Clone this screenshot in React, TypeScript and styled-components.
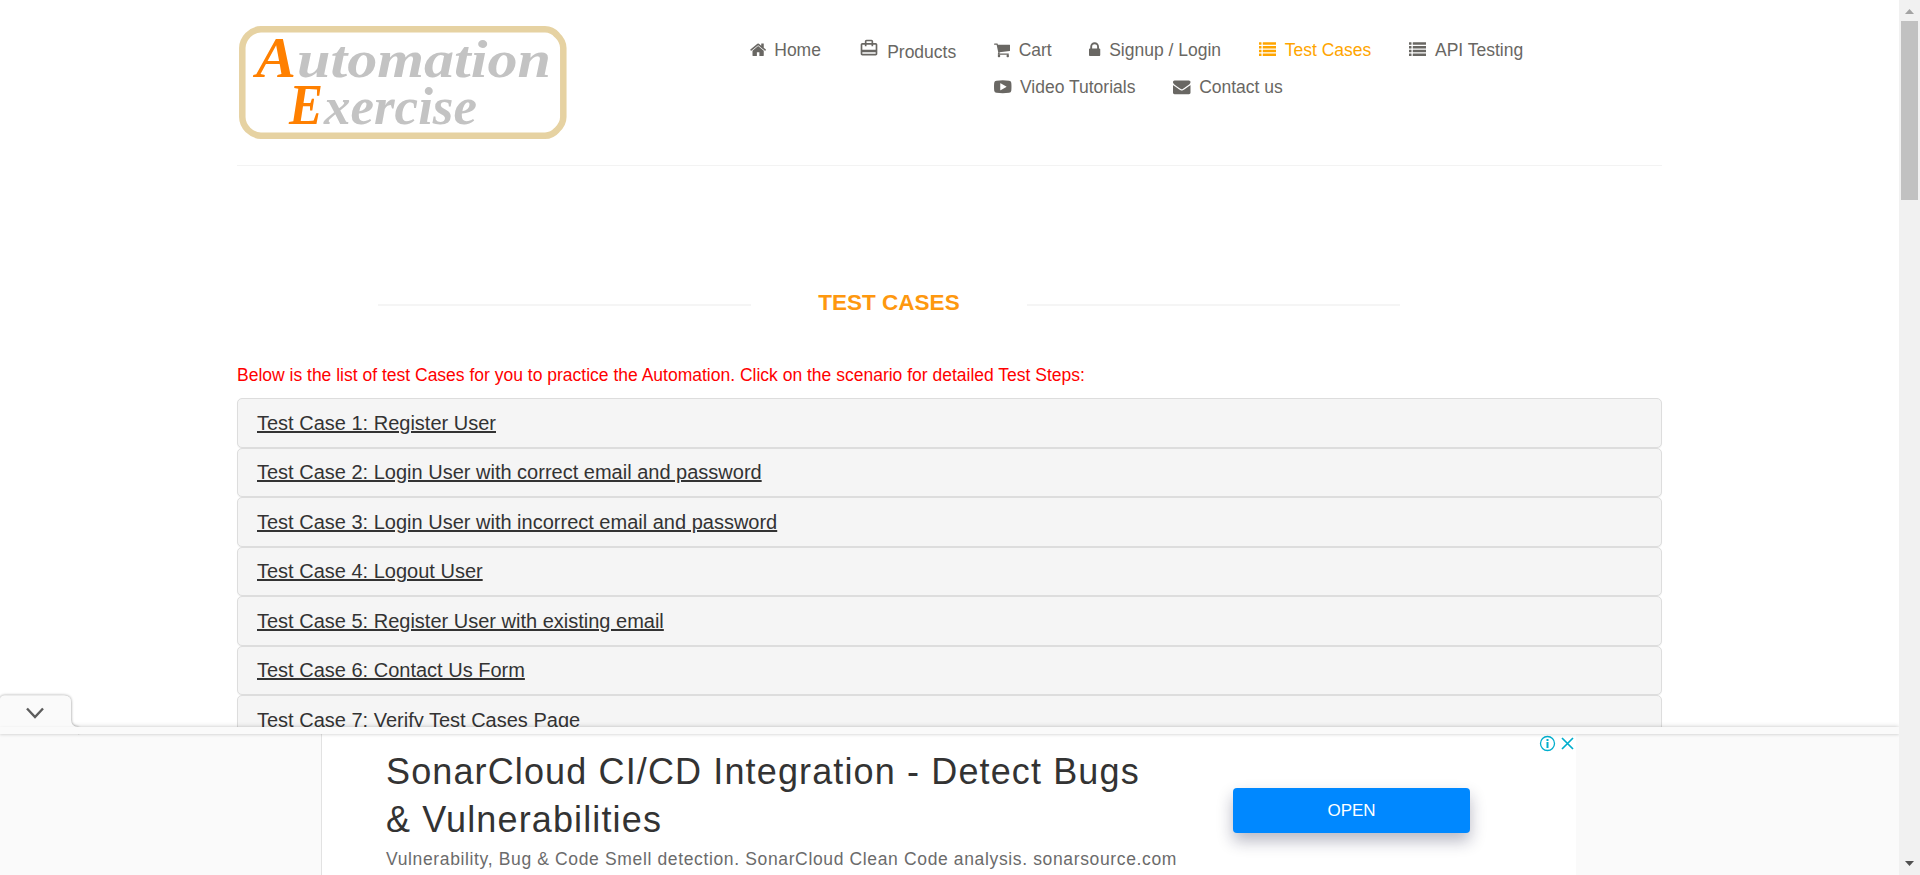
import React from "react";
import styled, { createGlobalStyle } from "styled-components";

const GlobalStyle = createGlobalStyle`
  * { box-sizing: border-box; }
  body {
    margin: 0;
    background: #fff;
    font-family: "Liberation Sans", Arial, sans-serif;
    overflow: hidden;
  }
`;

const Screen = styled.div`
  display: flex;
  position: relative;
  width: 1920px;
  height: 875px;
  overflow: hidden;
`;

const Page = styled.main`
  width: 1899px;
  height: 875px;
  padding: 0 237px;
  overflow: hidden;
`;

const Header = styled.header`
  display: flex;
  height: 166px;
  border-bottom: 1px solid #f3f3f3;
`;

const Logo = styled.svg`
  display: block;
  margin: 26px 0 0 2px;
  width: 327px;
  height: 113px;
  overflow: visible;
`;

const Nav = styled.nav`
  display: flex;
  flex-direction: column;
  gap: 17px;
  margin: 40px 0 0 183.500px;
`;

const NavRow = styled.div<{ $indent?: number }>`
  display: flex;
  align-items: flex-start;
  gap: 37.7px;
  height: 20px;
  padding-left: ${(p) => p.$indent ?? 0}px;
`;

const NavItem = styled.a<{ $active?: boolean; $drop?: number }>`
  display: flex;
  gap: 8.5px;
  color: ${(p) => (p.$active ? "orange" : "#696763")};
  font-size: 17.5px;
  line-height: 20px;
  white-space: nowrap;
  span {
    margin-top: ${(p) => p.$drop ?? 0}px;
  }
`;

const FaIcon = styled.svg<{ $w: number }>`
  display: block;
  width: ${(p) => p.$w}px;
  height: 17.5px;
  margin-top: 1px;
  fill: currentColor;
`;

const BagIcon = styled.svg`
  display: block;
  width: 20px;
  height: 20px;
  margin-top: -2px;
  fill: currentColor;
`;

const TitleRow = styled.div`
  display: flex;
  align-items: center;
  width: 1022px;
  margin: 123px 0 0 141px;
`;

const Rule = styled.div`
  flex: 0 0 373px;
  height: 2px;
  margin-top: 4px;
  background: #f5f5f5;
`;

const Title = styled.h2`
  flex: 1;
  margin: 0;
  color: #fe980f;
  font-size: 22.5px;
  line-height: 28px;
  font-weight: 700;
  text-align: center;
`;

const Intro = styled.p`
  margin: 47px 0 0;
  color: #f00;
  font-size: 17.5px;
  line-height: 22px;
`;

const Panels = styled.div`
  display: flex;
  flex-direction: column;
  margin-top: 12px;
`;

const Panel = styled.div`
  flex: none;
  height: 49.53px;
  padding: 12.5px 19px;
  border: 1px solid #ddd;
  border-radius: 5px;
  background: #f5f5f5;
  box-shadow: 0 1px 1px rgba(0, 0, 0, 0.05);
  color: #333;
  font-size: 20px;
  line-height: 22.5px;
  text-decoration: underline;
`;

const Scrollbar = styled.aside`
  display: flex;
  flex-direction: column;
  align-items: center;
  width: 21px;
  height: 875px;
  padding: 9px 0;
  background: #f1f1f1;
`;

const Arrow = styled.svg<{ $color: string }>`
  display: block;
  width: 9px;
  height: 5px;
  fill: ${(p) => p.$color};
`;

const Thumb = styled.div`
  width: 17px;
  height: 179px;
  margin: 7px 0 661px;
  background: #c1c1c1;
`;

const AdDock = styled.section`
  position: absolute;
  left: 0;
  bottom: 0;
  width: 1899px;
  height: 148px;
  background: #fafafa;
  box-shadow: 0 0 5px rgba(0, 0, 0, 0.2);
  clip-path: inset(-40px 0 0 0);
`;

const DockTab = styled.svg`
  position: absolute;
  left: 0;
  top: -35px;
  width: 90px;
  height: 43px;
`;

const TabShade = styled.path`
  fill: #fafafa;
  filter: drop-shadow(0 0 1.5px rgba(0, 0, 0, 0.45));
`;

const DockStrip = styled.div`
  position: relative;
  height: 7px;
  background: #fafafa;
  box-shadow: 0 1px 3px rgba(0, 0, 0, 0.14);
`;

const Ad = styled.div`
  display: flex;
  width: 1255px;
  height: 141px;
  margin-left: 321px;
  padding-left: 64px;
  border-left: 1px solid #e2e2e2;
  background: #fff;
`;

const AdCopy = styled.div`
  width: 847px;
  padding-top: 14px;
  white-space: nowrap;
`;

const AdTitle = styled.h3`
  margin: 0;
  color: #333;
  font-size: 36px;
  line-height: 48px;
  font-weight: 400;
  letter-spacing: 1.13px;
`;

const AdText = styled.p`
  margin: 4px 0 0;
  color: #6b6b6b;
  font-size: 17.5px;
  line-height: 22px;
  letter-spacing: 0.64px;
`;

const OpenButton = styled.button`
  width: 237px;
  height: 45px;
  margin-top: 54px;
  padding: 0;
  border: 0;
  border-radius: 4px;
  background: #08f;
  color: #fff;
  font: 17px "Liberation Sans", Arial, sans-serif;
  box-shadow: 0 8px 16px rgba(20, 20, 60, 0.3);
`;

const AdMarks = styled.svg`
  width: 36px;
  height: 17px;
  margin: 1px 0 0 69px;
`;

const HOME =
  "M1472 992v480q0 26-19 45t-45 19h-384v-384h-256v384h-384q-26 0-45-19t-19-45v-480q0-1 .5-3t.5-3l575-474 575 474q1 2 1 6zm223-69l-62 74q-8 9-21 11h-3q-13 0-21-7l-692-577-692 577q-12 8-24 7-13-2-21-11l-62-74q-8-10-7-23.5t11-21.5l719-599q32-26 76-26t76 26l244 204v-195q0-14 9-23t23-9h192q14 0 23 9t9 23v408l219 182q10 8 11 21.5t-7 23.5z";
const CART =
  "M704 1536q0 52-38 90t-90 38-90-38-38-90 38-90 90-38 90 38 38 90zm896 0q0 52-38 90t-90 38-90-38-38-90 38-90 90-38 90 38 38 90zm128-1088v512q0 24-16.5 42.5t-40.5 21.5l-1044 122q13 60 13 70 0 16-24 64h920q26 0 45 19t19 45-19 45-45 19h-1024q-26 0-45-19t-19-45q0-11 8-31.5t16-36 21.5-40 15.5-29.5l-177-823h-204q-26 0-45-19t-19-45 19-45 45-19h256q16 0 28.5 6.5t19.5 15.5 13 24.5 8 26 5.5 29.5 4.5 26h1201q26 0 45 19t19 45z";
const LOCK =
  "M640 768h512v-192q0-106-75-181t-181-75-181 75-75 181v192zm832 96v576q0 40-28 68t-68 28h-960q-40 0-68-28t-28-68v-576q0-40 28-68t68-28h32v-192q0-184 132-316t316-132 316 132 132 316v192h32q40 0 68 28t28 68z";
const BAG =
  "M20 6h-3V4c0-1.11-.89-2-2-2H9c-1.11 0-2 .89-2 2v2H4c-1.11 0-2 .89-2 2v11c0 1.11.89 2 2 2h16c1.11 0 2-.89 2-2V8c0-1.11-.89-2-2-2zM9 4h6v2H9V4zm11 15H4v-2h16v2zm0-5H4V8h3v2h2V8h6v2h2V8h3v6z";

const ListIcon = () => (
  <FaIcon $w={17.5} viewBox="0 0 1792 1792">
    {[128, 512, 896, 1280].map((y) => (
      <g key={y}>
        <rect x="0" y={y} width="256" height="256" rx="32" />
        <rect x="384" y={y} width="1408" height="256" rx="32" />
      </g>
    ))}
  </FaIcon>
);

const cases = [
  "Test Case 1: Register User",
  "Test Case 2: Login User with correct email and password",
  "Test Case 3: Login User with incorrect email and password",
  "Test Case 4: Logout User",
  "Test Case 5: Register User with existing email",
  "Test Case 6: Contact Us Form",
  "Test Case 7: Verify Test Cases Page",
];

export default function App() {
  return (
    <>
      <GlobalStyle />
      <Screen>
        <Page>
          <Header>
            <Logo viewBox="0 0 327 113">
              <path
                d="M22 3.3H306Q313 3.3 318 9Q324.3 15 324.3 22V91Q324.3 98 318 104Q313 109.7 306 109.7H22Q15 109.7 9 104Q3.3 98 3.3 91V22Q3.3 15 9 9Q15 3.3 22 3.3Z"
                fill="none"
                stroke="#e6d2a2"
                strokeWidth="6.5"
              />
              <g
                fontFamily="'Liberation Serif', 'Times New Roman', serif"
                fontStyle="italic"
                fontWeight="700"
                fill="#c3c3c3"
              >
                <text x="17" y="51" fontSize="56" fill="#ff8000" textLength="40" lengthAdjust="spacingAndGlyphs">A</text>
                <text x="58" y="50.500" fontSize="52" textLength="254" lengthAdjust="spacingAndGlyphs">utomation</text>
                <text x="50" y="98" fontSize="56" fill="#ff8000" textLength="34" lengthAdjust="spacingAndGlyphs">E</text>
                <text x="85" y="97.500" fontSize="52" textLength="153" lengthAdjust="spacingAndGlyphs">xercise</text>
              </g>
            </Logo>
            <Nav>
              <NavRow>
                <NavItem>
                  <FaIcon $w={16.25} viewBox="64 0 1664 1792"><path d={HOME} /></FaIcon>
                  <span>Home</span>
                </NavItem>
                <NavItem $drop={2}>
                  <BagIcon viewBox="0 0 24 24"><path d={BAG} /></BagIcon>
                  <span>Products</span>
                </NavItem>
                <NavItem>
                  <FaIcon $w={16.25} viewBox="64 0 1664 1792"><path d={CART} /></FaIcon>
                  <span>Cart</span>
                </NavItem>
                <NavItem>
                  <FaIcon $w={11.25} viewBox="320 0 1152 1792"><path d={LOCK} /></FaIcon>
                  <span>Signup / Login</span>
                </NavItem>
                <NavItem $active>
                  <ListIcon />
                  <span>Test Cases</span>
                </NavItem>
                <NavItem>
                  <ListIcon />
                  <span>API Testing</span>
                </NavItem>
              </NavRow>
              <NavRow $indent={244.5}>
                <NavItem>
                  <FaIcon $w={17.5} viewBox="0 0 1792 1792">
                    <path
                      fillRule="evenodd"
                      d="M250 270Q896 200 1542 270Q1740 290 1770 480Q1810 896 1770 1312Q1740 1502 1542 1522Q896 1592 250 1522Q52 1502 22 1312Q-18 896 22 480Q52 290 250 270ZM640 560V1232Q640 1265 675 1250L1260 925Q1295 896 1260 867L675 542Q640 527 640 560Z"
                    />
                  </FaIcon>
                  <span>Video Tutorials</span>
                </NavItem>
                <NavItem>
                  <FaIcon $w={17.5} viewBox="0 0 1792 1792">
                    <path d="M1792 710v794q0 66-47 113t-113 47H160q-66 0-113-47T0 1504V710q44 49 101 87 362 246 497 345 57 42 92.500 65.500t94.500 48 110 24.500h2q51 0 110-24.500t94.500-48T1194 1142q170-123 498-345 57-39 100-87zm0-294q0 79-49 151t-122 123q-376 261-468 325-10 7-42.500 30.500t-54 38-52 32.500-57.500 27-50 9h-2q-23 0-50-9t-57.500-27-52-32.500-54-38T639 1015q-91-64-262-182.500T172 690q-62-42-117-115.500T0 438q0-78 41.500-130T160 256h1472q65 0 112.500 47t47.500 113z" />
                  </FaIcon>
                  <span>Contact us</span>
                </NavItem>
              </NavRow>
            </Nav>
          </Header>

          <TitleRow>
            <Rule />
            <Title>TEST CASES</Title>
            <Rule />
          </TitleRow>

          <Intro>
            Below is the list of test Cases for you to practice the Automation. Click on the scenario for detailed Test Steps:
          </Intro>

          <Panels>
            {cases.map((c) => (
              <Panel key={c}>{c}</Panel>
            ))}
          </Panels>
        </Page>

        <Scrollbar>
          <Arrow $color="#a3a3a3" viewBox="0 0 9 5"><path d="M4.500 0L9 5H0Z" /></Arrow>
          <Thumb />
          <Arrow $color="#505050" viewBox="0 0 9 5"><path d="M0 0H9L4.500 5Z" /></Arrow>
        </Scrollbar>

        <AdDock>
          <DockTab viewBox="0 0 90 43">
            <TabShade d="M0 42V8Q0 3.500 5 3.500H64Q71 3.500 71 10V28Q71 34.500 78 35V42Z" />
            <path d="M0 35V8Q0 3.500 5 3.500H64Q71 3.500 71 10V28Q71 34.500 78 35V43H0Z" fill="#fafafa" />
            <path d="M27 16.500L35 25L43 16.500" fill="none" stroke="#5c5c5c" strokeWidth="2.400" />
          </DockTab>
          <DockStrip />
          <Ad>
            <AdCopy>
              <AdTitle>
                SonarCloud CI/CD Integration - Detect Bugs
                <br />
                &amp; Vulnerabilities
              </AdTitle>
              <AdText>
                Vulnerability, Bug &amp; Code Smell detection. SonarCloud Clean Code analysis. sonarsource.com
              </AdText>
            </AdCopy>
            <OpenButton>OPEN</OpenButton>
            <AdMarks viewBox="0 0 36 17" fill="none" stroke="#00aecd" strokeWidth="1.300">
              <circle cx="8.500" cy="8.500" r="7" />
              <path d="M8.500 7V13M8.500 4V6" strokeWidth="2" />
              <path d="M23 3L34 14M34 3L23 14" strokeWidth="1.700" />
            </AdMarks>
          </Ad>
        </AdDock>
      </Screen>
    </>
  );
}
